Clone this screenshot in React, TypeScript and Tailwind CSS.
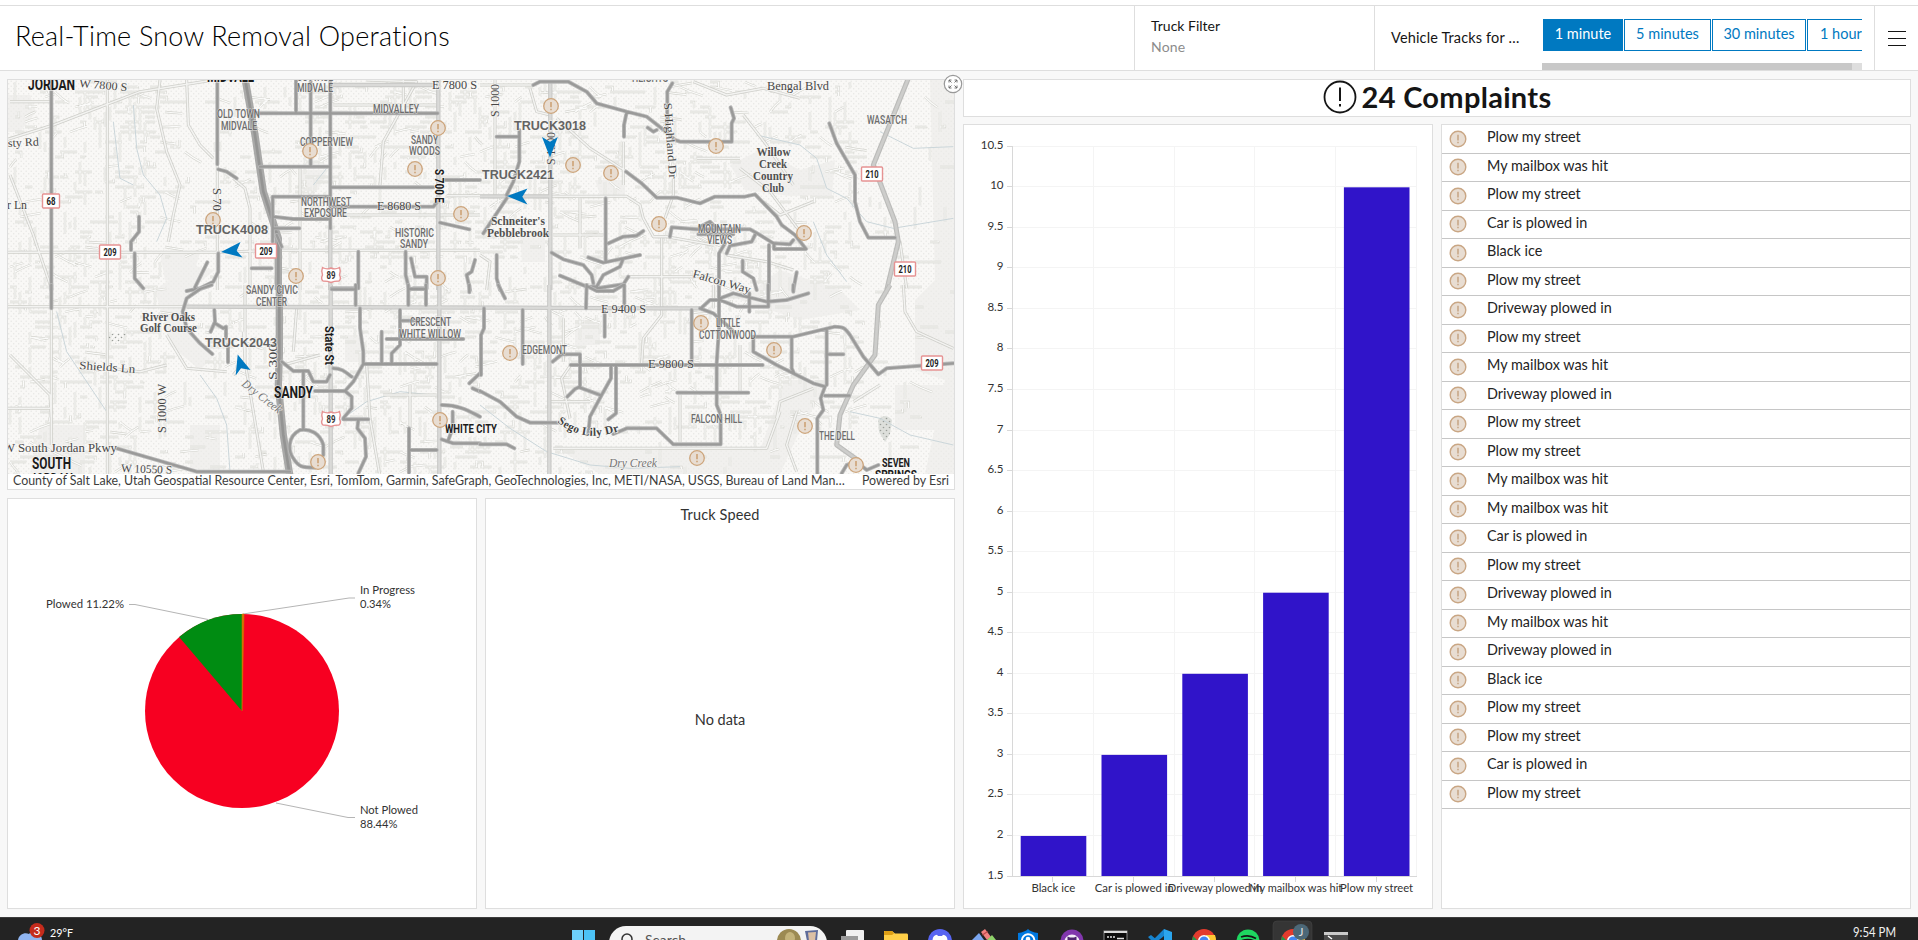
import React from "react";

const SANS = "Lato, 'Liberation Sans', sans-serif";

type TProps = {
  x: number;
  y: number;
  w?: number;
  size: number;
  fill?: string;
  anchor?: "start" | "middle" | "end";
  weight?: number;
  children: string;
};

function T({ x, y, w, size, fill = "#323232", anchor = "start", weight = 400, children }: TProps) {
  return (
    <text x={x} y={y} fontSize={size} fill={fill} textAnchor={anchor} fontWeight={weight} fontFamily={SANS} textLength={w} lengthAdjust="spacingAndGlyphs">
      {children}
    </text>
  );
}

/* ---------- Map ---------- */

type Quad = { x: number; y: number; arterial: string[]; minor: string[]; highway: string[]; plowed: string[]; creek: string[] };

const QUADS: Quad[] = [
  {
    x: 0,
    y: 75,
    highway: ["M735 10L765 180 790 350 835 490V645"],
    arterial: ["M1315 10V645", "M991 460V645", "M995 30H1300"],
    minor: ["M0 532H655L820 526H1440", "M0 200L160 150 420 50 640 15 740 12", "M652 268V645", "M700 310L735 340 750 400V640", "M322 15V645", "M900 270V645", "M1340 362H1440", "M990 420H1440", "M1100 15L1250 20 1150 200 1140 330", "M480 15L470 100 500 230 540 330 520 420 505 500", "M1210 15V110", "M1000 90H1310", "M560 15L565 150 600 210 640 250", "M30 80H150", "M30 300L100 480 154 640"],
    plowed: ["M154 10V645", "M991 10V460", "M652 20V268", "M655 283L680 290 710 310", "M755 115H1313", "M888 10V112", "M932 20V270", "M780 275H990", "M995 337H1300", "M1330 315H1440", "M1000 395H1300L1312 380", "M818 500V365H990", "M820 425L880 432H985", "M820 460H898", "M755 580H815", "M1320 443L1408 463", "M417 425V470L393 500V525", "M404 535V610L430 640", "M655 535V590L640 620 600 640 560 648", "M622 562L585 637", "M1075 530V640H995", "M1217 530V600L1228 645", "M1233 550L1245 605H1280V640H1240", "M1425 555L1415 590 1400 600 1410 645", "M830 480L845 515"],
    creek: ["M400 90L410 220 430 300 480 360 500 430 470 500", "M340 140L360 310 400 330", "M980 280L940 330"],
  },
  {
    x: 480,
    y: 75,
    highway: ["M1285 10L1180 270 1245 440 1255 500 1220 645"],
    arterial: ["M211 10V645", "M0 364H211"],
    minor: ["M211 364H440L480 390 490 430 520 485H560L700 510", "M545 490V645", "M580 310V360L555 430", "M740 540L860 560 940 585", "M440 605H650L700 600", "M45 15V360", "M0 30H160", "M150 40L170 110 211 120", "M230 130L330 220 440 290", "M790 120L860 210 940 330", "M780 280L870 350 960 470", "M220 480H370", "M0 540L30 560 20 645", "M1260 500L1280 640", "M640 20L740 60 850 40 960 70", "M300 370V520", "M650 250H780", "M430 200V330", "M850 380L900 420 1000 380"],
    plowed: ["M160 30L180 20H265L320 50 350 85 440 110 500 125 545 160 585 195 600 200H755V145L762 130 752 97", "M577 25L562 50V100L560 160", "M440 112L432 150V185", "M503 158L520 170 530 165", "M50 185H115", "M118 165V260L100 320 80 360", "M80 370L40 430 10 475", "M438 290L485 325 530 368H590L660 385 705 365H795L825 358 890 425 905 450 945 480 978 522H882V505L930 508 940 495", "M570 485L575 457 650 463H810L840 480 880 505", "M660 455L690 440 710 460", "M655 478H760", "M825 480L815 500 750 512 740 535", "M377 370V560", "M490 468L470 482 430 485 385 505", "M325 547L370 563 480 540", "M215 533L250 553 310 570 335 600 340 625", "M240 602L320 635 350 635 370 600 420 575 428 555", "M350 640L430 628 445 605", "M50 540V610L60 645", "M735 505L717 535V645", "M867 510V645", "M788 557V590L820 610 830 645", "M950 592L940 645", "M1048 145L1070 205 1125 300V380L1140 440 1165 488H1245"],
    creek: ["M830 180L960 210 1010 250 1040 340 1100 370 1160 440 1240 460 1420 430", "M1200 170L1300 220 1420 215", "M1000 440L1040 540 1100 620"],
  },
  {
    x: 0,
    y: 285,
    highway: ["M838 0V210L835 300 850 450 870 575"],
    arterial: ["M560 65L840 66 1440 68", "M992 0V575", "M1318 0V575"],
    minor: ["M0 65H560", "M154 70V480", "M322 0V575", "M735 230L760 380 790 560", "M700 270L735 225 730 140", "M30 210L150 330 154 400", "M1100 240L1110 400 1140 575", "M680 260L560 250 500 150", "M850 240L960 210", "M890 70L880 200", "M1150 330H1310", "M0 370H150", "M330 250L420 260 500 240", "M735 0V230", "M1230 300V430"],
    plowed: ["M154 0V70", "M635 0L600 12 560 40 548 80 560 130 600 175 637 207", "M643 75L645 110 632 140M645 115L670 130 678 125V160M684 180V232", "M845 230L880 258H925L940 290H980L990 270", "M910 260V430", "M900 435C860 455 865 500 880 520 895 545 905 548 945 548M900 435C930 430 960 445 970 480V510", "M1000 250C1030 250 1040 265 1055 275", "M945 318H1035L1060 290 1090 237H1310", "M1080 70V130L1090 200V237", "M1035 318L1055 335V370L1030 400", "M1030 403H1105", "M1075 405L1072 430 1095 460 1098 515 1075 565", "M1145 140V232", "M1200 75V180L1175 205V232", "M1160 162H1390M1205 107H1255", "M995 13H1065M1067 0V60", "M1225 0V60M1278 0V60M1230 12H1278", "M1408 0V22", "M1440 265L1408 295M1418 310L1440 320", "M1325 360C1380 360 1410 380 1440 395", "M1358 380V430L1345 465M1325 463L1360 475H1440", "M1227 430V565M1230 495H1310", "M350 490L590 560H870"],
    creek: ["M600 270L650 340 680 420 690 560", "M1000 420L1100 350 1200 320 1300 330", "M170 80L200 200 320 380"],
  },
  {
    x: 480,
    y: 285,
    highway: ["M1230 0L1195 60 1185 210 1120 300 1080 390 1070 480 1140 530"],
    arterial: ["M0 68H90L540 70H660", "M208 0V575"],
    minor: ["M545 0V90L490 160 485 235", "M1270 0L1275 80 1310 140 1420 190", "M211 350H330", "M272 240L245 280 270 400", "M890 400L900 350 1000 310", "M220 490H860L900 380", "M950 380L920 480 950 560", "M700 0V70", "M250 100V230", "M780 180V320", "M600 330V470", "M1200 300L1120 350"],
    plowed: ["M660 70L700 85 740 120 760 140", "M55 0L75 40", "M12 70V130L3 150V270", "M128 75V237", "M320 0L318 70", "M325 5L350 18H400L430 0", "M433 0V65", "M374 80V155", "M635 75V235", "M665 68L690 45H720L770 65H865V0", "M720 40L760 25 860 50 920 45 985 25", "M808 25V80", "M940 0V20", "M717 0V130L710 235V360L722 390V478H580L530 430H440L400 447", "M820 155H940L1065 125C1090 125 1095 130 1110 150L1150 215 1195 268 1220 250 1420 235", "M820 160V200L890 240 1000 295 1035 305 1022 340 1030 375 1012 400V565", "M935 160V250L942 265", "M1040 135V300M1045 208H1090M1035 332H1108", "M272 240H848", "M218 230L245 208H300V305L285 312 262 335", "M300 308L360 330", "M393 245V280L365 330 330 395 325 445", "M408 245V385L385 403", "M592 323H805", "M0 318L60 350 110 395 150 413H235", "M0 478H80L103 490", "M1085 565L1100 540 1130 530 1160 555 1195 540"],
    creek: ["M0 360L90 430 200 500 330 540 450 550 600 545", "M1110 380L1200 400 1290 450 1420 480"],
  },
];

function localStreets() {
  let s = 20240117;
  const rnd = () => {
    s = (s * 1664525 + 1013904223) % 4294967296;
    return s / 4294967296;
  };
  let d = "";
  for (let i = 0; i < 2500; i++) {
    const x = 10 + Math.round(rnd() * 188) * 5;
    const y = 82 + Math.round(rnd() * 78) * 5;
    const a = 6 + rnd() * 17;
    const b = rnd() * 14 - 7;
    const k = rnd();
    if (x > 850 && rnd() < 0.8) continue;
    if (x > 165 && x < 205 && rnd() < 0.75) continue;
    if (x > 205 && x < 270 && rnd() < 0.4) continue;
    if (y > 430 && x > 560 && rnd() < 0.75) continue;
    if (x > 730 && x < 800 && y > 145 && y < 200) continue;
    if (k < 0.32) d += `M${x} ${y}h${a.toFixed(1)}`;
    else if (k < 0.66) d += `M${x} ${y}v${a.toFixed(1)}`;
    else if (k < 0.84) d += `M${x} ${y}h${(a / 2).toFixed(1)}v${b.toFixed(1)}`;
    else d += `M${x} ${y}q${(a / 2).toFixed(1)} ${b.toFixed(1)} ${a.toFixed(1)} ${(b * 1.6).toFixed(1)}`;
  }
  return d;
}
const LOCAL = localStreets();

type Kind = "city" | "area" | "road" | "place" | "water" | "truck";
type Label = [string, number, number, number, Kind, number?];

/* text, left, baseline, width, kind, rotation */
const LABELS: Label[] = [
  ["JORDAN", 28, 90, 47, "city"],
  ["MIDVALE", 207, 82, 47, "city"],
  ["SANDY", 274, 398, 39, "city"],
  ["SOUTH", 32, 469, 39, "city"],
  ["JORDAN", 30, 484.5, 43, "city"],
  ["MIDVALE", 297, 92, 36, "area"],
  ["COTTAGE", 297, 80.5, 36, "area"],
  ["MIDVALLEY", 373, 113, 46, "area"],
  ["OLD TOWN", 217, 118, 43, "area"],
  ["MIDVALE", 221, 130, 36, "area"],
  ["COPPERVIEW", 300, 146, 53, "area"],
  ["SANDY", 411, 144, 27, "area"],
  ["WOODS", 409, 155, 31, "area"],
  ["NORTHWEST", 301, 206, 50, "area"],
  ["EXPOSURE", 304, 217, 43, "area"],
  ["HISTORIC", 395, 237, 39, "area"],
  ["SANDY", 400, 248, 28, "area"],
  ["SANDY CIVIC", 246, 294, 52, "area"],
  ["CENTER", 256, 306, 31, "area"],
  ["HEIGHTS", 632, 82, 36, "area"],
  ["WASATCH", 867, 124, 40, "area"],
  ["MOUNTAIN", 698, 233, 43, "area"],
  ["VIEWS", 707, 244, 25, "area"],
  ["CRESCENT", 410, 326, 41, "area"],
  ["WHITE WILLOW", 399, 338, 62, "area"],
  ["LITTLE", 716, 327, 24, "area"],
  ["COTTONWOOD", 699, 339, 57, "area"],
  ["EDGEMONT", 522, 354, 45, "area"],
  ["FALCON HILL", 691, 423, 51, "area"],
  ["THE DELL", 819, 440, 36, "area"],
  ["W 7800 S", 79, 87, 48, "road", 5],
  ["E 7800 S", 432, 89, 45, "road"],
  ["sty Rd", 8, 147, 31, "road", -3],
  ["r Ln", 7, 209, 20, "road"],
  ["E 8680 S", 377, 210, 44, "road"],
  ["Bengal Blvd", 767, 89.5, 62, "road"],
  ["Falcon Way", 692, 277, 60, "road", 16],
  ["Shields Ln", 79, 369, 56, "road", 4],
  ["W South Jordan Pkwy", 3, 452, 114, "road"],
  ["W 10550 S", 121, 472, 51, "road", 2],
  ["E 10600 S", 373, 482, 52, "road"],
  ["E 10600 S", 490, 482, 52, "road"],
  ["E 9400 S", 601, 313, 45, "road"],
  ["E 9800 S", 648, 368, 46, "road"],
  ["S 70", 213, 188, 23, "road", 90],
  ["S 1000", 499, 117, 33, "road", -90],
  ["S 1300", 555, 165, 33, "road", -90],
  ["S Highland Dr", 664, 103, 76, "road", 86],
  ["S 1000 W", 166, 433, 49, "road", -90],
  ["S 300", 277, 380, 36, "road", -90],
  ["River Oaks", 142, 321, 53, "place"],
  ["Golf Course", 140, 332, 57, "place"],
  ["Willow", 756.5, 156, 34, "place"],
  ["Creek", 759, 168, 28, "place"],
  ["Country", 753, 180, 40, "place"],
  ["Club", 762, 192, 22, "place"],
  ["Schneiter's", 491, 225, 54, "place"],
  ["Pebblebrook", 487, 237, 62, "place"],
  ["Dry Creek", 241, 385, 47, "water", 38],
  ["Dry Creek", 609, 467, 48, "water"],
];

const CITY_SMALL: Label[] = [
  ["S 700 E", 435, 169, 34, "city", 90],
  ["State St", 325, 326, 39, "city", 90],
  ["WHITE CITY", 445, 433, 52, "city"],
  ["SEVEN", 882, 467, 28, "city"],
  ["SPRINGS", 875, 478.5, 42, "city"],
];

const TRUCKS: Label[] = [
  ["TRUCK4008", 196, 234, 72, "truck"],
  ["TRUCK3018", 514, 129.5, 72, "truck"],
  ["TRUCK2421", 482, 179, 72, "truck"],
  ["TRUCK2043", 205, 347, 72, "truck"],
];

const KIND: Record<Kind, { size: number; fill: string; family: string; weight: number; style?: string; halo: number }> = {
  city: { size: 16, fill: "#1c1c1c", family: "Roboto, sans-serif", weight: 700, halo: 1.5 },
  area: { size: 12.5, fill: "#6c6c6c", family: "Roboto, sans-serif", weight: 500, halo: 1.2 },
  road: { size: 11.5, fill: "#474747", family: "'Liberation Serif', serif", weight: 400, halo: 1.5 },
  place: { size: 11.5, fill: "#505050", family: "'Liberation Serif', serif", weight: 700, halo: 1.5 },
  water: { size: 12, fill: "#777777", family: "'Liberation Serif', serif", weight: 400, style: "italic", halo: 1.5 },
  truck: { size: 12.5, fill: "#636363", family: "'Liberation Sans', sans-serif", weight: 700, halo: 1.5 },
};

function MapLabel({ l, size }: { l: Label; size?: number }) {
  const [text, x, y, w, kind, rot] = l;
  const k = KIND[kind];
  return (
    <text
      x={x}
      y={y}
      fontSize={size ?? k.size}
      fill={k.fill}
      fontFamily={k.family}
      fontWeight={k.weight}
      fontStyle={k.style}
      stroke="#f8f7f5"
      strokeOpacity={0.7}
      strokeWidth={k.halo}
      paintOrder="stroke"
      textLength={w}
      lengthAdjust="spacingAndGlyphs"
      transform={rot ? `rotate(${rot} ${x} ${y})` : undefined}
    >
      {text}
    </text>
  );
}

const ALERTS: [number, number][] = [
  [310, 151], [438, 128], [415, 169], [461, 214], [213, 220], [296, 276], [438, 278],
  [551, 106], [573, 165], [611, 173], [716, 146], [659, 224], [804, 233],
  [440, 420], [318, 462], [510, 353], [701, 323], [774, 350], [805, 426], [697, 458], [856, 465],
];

const SHIELDS: [string, number, number, number][] = [
  ["68", 51, 201, 17],
  ["209", 110, 252, 21],
  ["209", 266, 251, 21],
  ["210", 872, 174, 21],
  ["210", 905, 269, 21],
  ["209", 932, 363, 21],
];

function AlertMark({ x, y, r = 7.3 }: { x: number; y: number; r?: number }) {
  return (
    <g transform={`translate(${x} ${y})`}>
      <circle r={r} fill="#e8ddd2" stroke="#cda57c" strokeWidth={1.3} />
      <path d="M0 -4V1.2M0 2.8V4.2" stroke="#c79560" strokeWidth={1.3} />
    </g>
  );
}

const ARROWS = [
  "M221 252L240.500 242 236.700 250.700 242.500 257.500Z",
  "M550 157.500L542 137 550 141.700 557.800 137Z",
  "M507 196L527.500 188.500 522.300 196.700 527.500 204.500Z",
  "M237.700 354.500L235.700 375.500 241 368.300 250.500 370Z",
];

function CityMap() {
  const at = (q: Quad) => `translate(${q.x} ${q.y}) scale(0.33333)`;
  return (
    <svg viewBox="8 80 946 394" className="block h-[394px] w-[946px]">
      <defs>
        <pattern id="dots" width="5" height="5" patternUnits="userSpaceOnUse">
          <rect width="5" height="5" fill="#f9f8f6" />
          <circle cx="1.2" cy="1.2" r="0.7" fill="#e6e6e3" />
          <circle cx="3.7" cy="3.7" r="0.7" fill="#e6e6e3" />
        </pattern>
        <pattern id="cemetery" width="6" height="6" patternUnits="userSpaceOnUse">
          <circle cx="1.5" cy="1.5" r="0.8" fill="#9a9d98" />
          <circle cx="4.5" cy="4.5" r="0.8" fill="#9a9d98" />
        </pattern>
        <path id="sego" d="M557 422Q569 432 584 435T623 430" />
      </defs>
      <rect x="8" y="80" width="946" height="394" fill="url(#dots)" />
      <g fill="#ecebe8" opacity="0.55">
        <path d="M8 95H30L36 112 20 132H8ZM155 290L190 265 215 270 190 290 185 330 215 355 200 370 170 345ZM300 170H328L318 190H302ZM730 165L760 150 800 170 835 160 832 195 790 196 745 190ZM595 180H625V195H600ZM40 425H85V474H30ZM190 425H220V474H190ZM520 235H545V262H522ZM785 380H830L800 430 780 474H600L560 450H760ZM780 270L840 290 860 310 800 320 740 300ZM930 80H954V474H925L945 380 915 370V300L935 280Z" />
        <path d="M160 253H200L190 285 165 280ZM345 335H362V362H345ZM895 385H954V430H895ZM575 320H600V345H575Z" />
      </g>
      <path d={LOCAL} fill="none" stroke="#d4d4ce" strokeWidth="2.3" />
      <path d={LOCAL} fill="none" stroke="#fbfbfa" strokeWidth="1.2" />
      <path d="M108 333L130 334 117 344 108 340Z" fill="url(#cemetery)" />
      <path d="M878 420Q885 412 892 420L890 434 885 442 879 432Z" fill="#dddfdb" />
      <path d="M878 420Q885 412 892 420L890 434 885 442 879 432Z" fill="url(#cemetery)" />
      <g fill="none" strokeLinejoin="round">
        {QUADS.map((q, i) => (
          <g key={i} transform={at(q)}>
            <path d={q.creek.join("")} stroke="#cbd6da" strokeWidth="3" />
            <path d={q.minor.join("")} stroke="#cfcfca" strokeWidth="9" />
            <path d={q.minor.join("")} stroke="#f3f3f1" strokeWidth="4.5" />
            <path d={q.arterial.join("")} stroke="#c6c6c4" strokeWidth="13" />
            <path d={q.arterial.join("")} stroke="#dadad8" strokeWidth="7" />
          </g>
        ))}
        {QUADS.map((q, i) => (
          <g key={i} transform={at(q)}>
            <path d={q.highway.join("")} stroke={q.x ? "#bcbcba" : "#a9a9a8"} strokeWidth={q.x ? 15 : 22} />
            <path d={q.highway.join("")} stroke={q.x ? "#cdcdcb" : "#949493"} strokeWidth={8} />
            <path d={q.plowed.join("")} stroke="#b8b8b8" strokeWidth="12" strokeLinecap="round" />
            <path d={q.plowed.join("")} stroke="#9a9a99" strokeWidth="7" strokeLinecap="round" />
          </g>
        ))}
      </g>
      {LABELS.map((l, i) => (
        <MapLabel key={i} l={l} />
      ))}
      {CITY_SMALL.map((l, i) => (
        <MapLabel key={i} l={l} size={13.5} />
      ))}
      <text fontSize="11.5" fill="#444" fontFamily="'Liberation Serif', serif" stroke="#f8f7f5" strokeWidth="1.2" paintOrder="stroke" fontWeight="700">
        <textPath href="#sego" textLength="66">Sego Lily Dr</textPath>
      </text>
      {SHIELDS.map(([t, x, y, w], i) => (
        <g key={i}>
          <rect x={x - w / 2} y={y - 7} width={w} height={14} rx="1" fill="#fff" stroke="#e69393" strokeWidth="1.4" />
          <text x={x} y={y + 4} textAnchor="middle" fontSize="11.5" fontWeight="700" fontFamily="Roboto, sans-serif" fill="#222" textLength={w - 8} lengthAdjust="spacingAndGlyphs">
            {t}
          </text>
        </g>
      ))}
      {[275, 419].map((y) => (
        <g key={y}>
          <path d={`M322.500 ${y - 7.5}Q327 ${y - 5} 331 ${y - 7}Q335 ${y - 5} 339.500 ${y - 7.5}Q341 ${y - 4} 339.500 ${y}Q341.500 ${y + 4} 339 ${y + 6}Q334 ${y + 6} 331 ${y + 7.5}Q328 ${y + 6} 323 ${y + 6}Q320.500 ${y + 4} 322.500 ${y}Q321 ${y - 4} 322.500 ${y - 7.5}Z`} fill="#fff" stroke="#e69393" strokeWidth="1.4" />
          <text x="331" y={y + 4} textAnchor="middle" fontSize="11" fontWeight="700" fontFamily="Roboto, sans-serif" fill="#333" textLength="9" lengthAdjust="spacingAndGlyphs">
            89
          </text>
        </g>
      ))}
      {ALERTS.map(([x, y], i) => (
        <AlertMark key={i} x={x} y={y} />
      ))}
      {TRUCKS.map((l, i) => (
        <MapLabel key={i} l={l} />
      ))}
      {ARROWS.map((d) => (
        <path key={d} d={d} fill="#0079c1" />
      ))}
    </svg>
  );
}

/* ---------- Charts ---------- */

const BARS: [string, number, number][] = [
  ["Black ice", 2, 44],
  ["Car is plowed in", 3, 79],
  ["Driveway plowed in", 4, 94],
  ["My mailbox was hit", 5, 93],
  ["Plow my street", 10, 73],
];

function BarChart() {
  const x0 = 49;
  const step = 80.8;
  const base = 751.5;
  const yOf = (v: number) => base - (v - 1.5) * 81.08;
  const ticks = Array.from({ length: 19 }, (_, i) => 1.5 + i * 0.5);
  return (
    <svg viewBox="0 0 468 783" className="block h-[783px] w-[468px]">
      <g shapeRendering="crispEdges" stroke="#f4f4f4" strokeWidth="1">
        {ticks.map((v) => (
          <path key={v} d={`M${x0} ${Math.round(yOf(v)) - 0.5}H${x0 + 404}`} />
        ))}
        {[1, 2, 3, 4, 5].map((i) => (
          <path key={i} d={`M${Math.round(x0 + i * step) - 0.5} 21V751`} />
        ))}
      </g>
      {BARS.map(([name, v], i) => (
        <rect key={name} x={x0 + i * step + 7.7} y={yOf(v)} width={65.6} height={base - yOf(v)} fill="#3014c9" />
      ))}
      <g shapeRendering="crispEdges" stroke="#d8d8d8" strokeWidth="1" fill="none">
        <path d={`M${x0 - 0.5} 21V752M${x0} ${base}H${x0 + 404}`} />
        {ticks.map((v) => (
          <path key={v} d={`M${x0 - 6} ${Math.round(yOf(v)) - 0.5}H${x0}`} />
        ))}
        {BARS.map(([n], i) => (
          <path key={n} d={`M${Math.round(x0 + (i + 0.5) * step) - 0.5} 752V757`} />
        ))}
      </g>
      {ticks.map((v) => (
        <T key={v} x={39.5} y={yOf(v) + 2} size={11.5} anchor="end">
          {String(v)}
        </T>
      ))}
      {BARS.map(([name, , w], i) => (
        <T key={name} x={x0 + (i + 0.5) * step} y={767} w={w} size={11} anchor="middle">
          {name}
        </T>
      ))}
    </svg>
  );
}

function PieChart() {
  const cx = 234;
  const cy = 212;
  const r = 97;
  const pt = (f: number) => `${cx + r * Math.sin(f * 2 * Math.PI)} ${cy - r * Math.cos(f * 2 * Math.PI)}`;
  return (
    <svg viewBox="0 0 468 409" className="block h-[409px] w-[468px]">
      <g fill="none" stroke="#b5b5b5">
        <path d="M121 105.500H127L200 120.500M347 99H341L235 115M347 318.500H340L268 304" />
      </g>
      <circle cx={cx} cy={cy} r={r} fill="#f70021" />
      <path d={`M${cx} ${cy}L${pt(0.8878)}A${r} ${r} 0 0 1 ${pt(0)}Z`} fill="#008c12" />
      <path d={`M${cx} ${cy}L${pt(0)}A${r} ${r} 0 0 1 ${pt(0.0034)}Z`} fill="#d07400" stroke="#d07400" strokeWidth="0.5" />
      <T x={38} y={109} w={78} size={11.5}>Plowed 11.22%</T>
      <T x={352} y={95} w={55} size={11.5}>In Progress</T>
      <T x={352} y={109} w={31} size={11.5}>0.34%</T>
      <T x={352} y={315} w={58} size={11.5}>Not Plowed</T>
      <T x={352} y={329} w={37.5} size={11.5}>88.44%</T>
    </svg>
  );
}

/* ---------- Complaint list ---------- */

const P = "Plow my street";
const M = "My mailbox was hit";
const C = "Car is plowed in";
const B = "Black ice";
const D = "Driveway plowed in";
const COMPLAINTS = [P, M, P, C, B, P, D, P, M, D, P, P, M, M, C, P, D, M, D, B, P, P, C, P];

function ComplaintRow({ text }: { text: string }) {
  return (
    <li className="flex h-[28.5px] shrink-0 items-center border-b border-[#c6c6c6]">
      <svg viewBox="-9 -9 18 18" className="ml-[7px] h-[18px] w-[18px]">
        <circle r="7.800" fill="#e8ddd2" stroke="#c9a684" strokeWidth="1.400" />
        <path d="M0 -4.200V1.500M0 2.800V4.200" stroke="#b98f66" strokeWidth="1.100" />
      </svg>
      <span className="mb-[3px] ml-[20px] text-[14.4px] leading-5 text-[#242424]">{text}</span>
    </li>
  );
}

/* ---------- Header ---------- */

function Header() {
  return (
    <header className="mt-[5px] flex h-[66px] shrink-0 border-y border-[#dedede] bg-white text-[#151515]">
      <h1 className="flex flex-1 items-center pb-[3px] pl-[15px] text-[27px] font-light text-black">
        <span className="tracking-[0.22px] whitespace-nowrap">Real-Time Snow Removal Operations</span>
      </h1>
      <div className="flex w-[240px] flex-col border-l border-[#dedede] pt-[9px] pl-4 text-[14px] leading-[21px]">
        <span>Truck Filter</span>
        <span className="tracking-[0.2px] text-[#8c8c8c]">None</span>
      </div>
      <div className="flex w-[500px] border-l border-[#dedede] pl-4">
        <span className="w-[151px] self-center text-[14.5px] tracking-[0.15px] whitespace-nowrap">Vehicle Tracks for …</span>
        <div className="flex w-[320px] flex-col justify-between">
          <div className="mt-[13px] flex h-8 gap-px overflow-hidden pl-px text-[14.5px] text-[#0079c1]">
            <span className="flex w-[80px] shrink-0 items-center justify-center bg-[#0079c1] pb-[2px] text-white">1 minute</span>
            <span className="flex w-[87px] shrink-0 items-center justify-center border border-[#0079c1] pb-[2px]">5 minutes</span>
            <span className="flex w-[94px] shrink-0 items-center justify-center border border-[#0079c1] pb-[2px]">30 minutes</span>
            <span className="flex w-[70px] shrink-0 items-center border border-[#0079c1] pb-[2px] pl-3 whitespace-nowrap">1 hour</span>
          </div>
          <div className="h-[7px] bg-[#dedede]">
            <div className="h-full w-[310px] bg-[#c8c8c8]" />
          </div>
        </div>
      </div>
      <div className="flex w-[44px] flex-col items-start justify-center gap-[6px] border-l border-[#dedede] pl-[13px]">
        <i className="block h-px w-[18px] bg-[#151515]" />
        <i className="block h-px w-[18px] bg-[#151515]" />
        <i className="block h-px w-[18px] bg-[#151515]" />
      </div>
    </header>
  );
}

/* ---------- Taskbar ---------- */

function Taskbar() {
  return (
    <footer className="h-[23px] shrink-0 overflow-hidden bg-[#232323]">
      <svg viewBox="0 917 1918 23" className="block h-[23px] w-[1918px]">
        <rect x="0" y="917" width="1918" height="1" fill="#3c3c3c" />
        <path d="M18 940C19 934 25 932 29 934C34 928 42 934 42 940Z" fill="#8fb4f0" />
        <circle cx="37" cy="930.500" r="7.500" fill="#c42b1c" />
        <T x={37} y={935} size={12} fill="#fff" anchor="middle">3</T>
        <T x={50} y={937} w={23} size={12} fill="#fff">29°F</T>
        <rect x="572" y="930" width="11" height="11" fill="#6dd0fb" />
        <rect x="584" y="930" width="11" height="11" fill="#4cc2f5" />
        <rect x="609" y="926" width="218" height="34" rx="17" fill="#f3f3f3" />
        <circle cx="627" cy="939" r="5" fill="none" stroke="#333" strokeWidth="1.500" />
        <T x={645} y={944.5} w={41} size={14} fill="#555">Search</T>
        <ellipse cx="789" cy="941" rx="12" ry="12" fill="#9c8a52" />
        <ellipse cx="790" cy="938" rx="5" ry="6" fill="#c4b37a" />
        <path d="M805 931L818 930 817 941H807Z" fill="#5f6c9a" />
        <path d="M808 932.500L816 932 815 941H809Z" fill="#dcc0a4" />
        <rect x="846" y="930" width="18" height="12" rx="1" fill="#f0f0f0" />
        <rect x="841" y="936" width="17" height="6" fill="#9a9a9a" />
        <path d="M884 931H892L895 933.500H907Q908 933.500 908 935V941H884Z" fill="#ffcf48" />
        <path d="M884 932Q884 931 885 931H892L894 933.500 892 935H884Z" fill="#dd9e14" />
        <circle cx="940" cy="941" r="12" fill="#5865f2" />
        <path d="M932.500 940Q933 935 937 934.800L938 936H942L943 934.800Q947 935 947.500 940Z" fill="#fff" />
        <path d="M981 932L985 929 991 937 987 940Z" fill="#f08080" />
        <path d="M972 940L979 933 984 940Z" fill="#7ba6f0" />
        <path d="M987 940L992 935 996 940Z" fill="#8ed36a" />
        <path d="M982.500 935L987.500 931.500" stroke="#c04848" strokeWidth="1.200" />
        <path d="M1018 940V933Q1025 932 1028 929Q1031 932 1038 933V940Z" fill="#0078e0" />
        <path d="M1022 941A6.200 6.200 0 0 1 1034.400 940" fill="none" stroke="#fff" strokeWidth="2" />
        <circle cx="1028" cy="939" r="2.300" fill="#fff" />
        <circle cx="1072" cy="941" r="11.500" fill="#8136ad" />
        <circle cx="1072" cy="942" r="7.600" fill="#f4ecf8" />
        <path d="M1067.500 940V936.500L1070 937.500H1074L1076.500 936.500V940Z" fill="#4f2470" />
        <rect x="1104" y="931" width="23" height="10" fill="#0c0c0c" stroke="#8a8a8a" strokeWidth="1" />
        <rect x="1104" y="931" width="23" height="2" fill="#d9d9d9" />
        <path d="M1107 937H1109M1110 937H1112M1113 937H1115M1117 938.500H1124" stroke="#e0e0e0" strokeWidth="1.500" />
        <path d="M1164 929L1172 932V940H1164Z" fill="#2ba5ee" />
        <path d="M1148 937L1151 935 1157 940H1151ZM1164 929V936L1159 940H1153Z" fill="#1784cf" />
        {[1204, 1293].map((x) => (
          <g key={x}>
            {x === 1293 && <rect x="1273" y="921" width="39" height="24" rx="4" fill="#353535" stroke="#444" strokeWidth="0.600" />}
            <circle cx={x} cy="941" r="12" fill="#e33b2e" />
            <path d={`M${x + 2} 935H${x + 11}Q${x + 12} 938 ${x + 12} 941H${x + 4}Z`} fill="#fcc934" />
            <path d={`M${x - 11} 936L${x - 6} 941H${x - 12}Z`} fill="#229849" />
            <circle cx={x} cy="941" r="6" fill="#fff" />
            <circle cx={x} cy="941" r="4.500" fill="#4285f4" />
          </g>
        ))}
        <circle cx="1248" cy="941" r="11.500" fill="#1ed760" />
        <path d="M1241 937Q1249 934 1256 938.500M1242 940.500Q1249 938.500 1254 941" stroke="#151515" strokeWidth="1.800" fill="none" />
        <circle cx="1301" cy="932" r="8" fill="#4c6878" />
        <T x={1301} y={936} size={11} fill="#e6e6e6" anchor="middle">J</T>
        <rect x="1324" y="932" width="24" height="8" fill="#4a4a4a" />
        <rect x="1324" y="932" width="24" height="3" fill="#c9c9c9" />
        <path d="M1328 936L1332 939" stroke="#fff" strokeWidth="1.500" />
        <T x={1853} y={937} w={43} size={12.5} fill="#f0f0f0">9:54 PM</T>
      </svg>
    </footer>
  );
}

export default function App() {
  return (
    <div className="flex h-[940px] w-[1918px] flex-col overflow-hidden bg-white font-[Lato,'Liberation_Sans',sans-serif]">
      <Header />
      <main className="flex h-[846px] shrink-0 gap-2 bg-[#f8f8f8] px-[7px] py-2">
        <section className="flex w-[948px] flex-col gap-2">
          <div className="relative h-[411px] border border-[#dedede] bg-white">
            <CityMap />
            <div className="-mt-px flex h-[15px] items-center justify-between pr-[5px] pl-[5px] text-[12.4px] leading-[15px] whitespace-nowrap text-[#3c3c3c]">
              <span>County of Salt Lake, Utah Geospatial Resource Center, Esri, TomTom, Garmin, SafeGraph, GeoTechnologies, Inc, METI/NASA, USGS, Bureau of Land Man…</span>
              <span>Powered by Esri</span>
            </div>
            <svg viewBox="0 0 20 20" className="absolute -top-[6px] -right-[9px] h-5 w-5">
              <circle cx="10" cy="10" r="8.700" fill="#fff" stroke="#999" strokeWidth="1.200" />
              <path d="M6 8.500V6H8.500M11.500 6H14V8.500M14 11.500V14H11.500M8.500 14H6V11.500M6 6L8.500 8.500M14 6L11.500 8.500M14 14L11.500 11.500M6 14L8.500 11.500" fill="none" stroke="#666" strokeWidth="0.900" />
            </svg>
          </div>
          <div className="flex h-[411px] gap-2">
            <div className="flex-1 border border-[#dedede] bg-white">
              <PieChart />
            </div>
            <div className="flex flex-1 flex-col border border-[#dedede] bg-white text-center text-[14.5px] text-[#323232]">
              <div className="h-8 pt-[5px] tracking-[0.15px]">Truck Speed</div>
              <div className="flex flex-1 items-center justify-center">No data</div>
            </div>
          </div>
        </section>
        <section className="flex w-[948px] flex-col gap-[7px]">
          <div className="flex h-[38px] shrink-0 items-center justify-center gap-[5px] border border-[#dedede] bg-white text-[#151515]">
            <svg viewBox="0 0 34 34" className="-mt-[3px] h-[34px] w-[34px]">
              <circle cx="17" cy="17" r="15.500" fill="none" stroke="#151515" strokeWidth="1.800" />
              <path d="M17 7.500V21M17 24V26.500" stroke="#151515" strokeWidth="2" />
            </svg>
            <span className="-mt-[2px] text-[29px] leading-[34px] font-bold tracking-[0.3px]">24 Complaints</span>
          </div>
          <div className="flex h-[785px] gap-2">
            <div className="flex-1 border border-[#dedede] bg-white">
              <BarChart />
            </div>
            <ul className="flex flex-1 flex-col border border-[#dedede] bg-white">
              {COMPLAINTS.map((t, i) => (
                <ComplaintRow key={i} text={t} />
              ))}
            </ul>
          </div>
        </section>
      </main>
      <Taskbar />
    </div>
  );
}
